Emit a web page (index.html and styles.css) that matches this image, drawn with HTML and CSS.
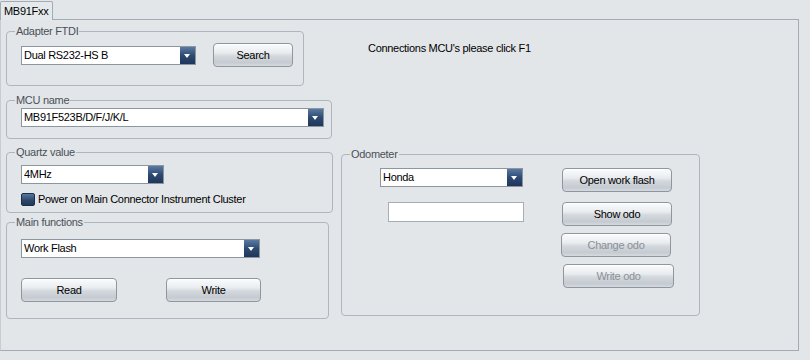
FILE: index.html
```html
<!DOCTYPE html>
<html lang="en">
<head>
    <meta charset="UTF-8">
    <title>MB91Fxx</title>
    <link rel="stylesheet" href="styles.css">
</head>
<body>
    <div class="tabs">
        <div class="tab">MB91Fxx</div>
    </div>
    <div class="pane">
        <div class="col-left">
            <fieldset class="group g-adapter">
                <legend>Adapter FTDI</legend>
                <div class="inner row">
                    <div class="combo combo-adapter"><span>Dual RS232-HS B</span><i class="arrow"></i></div>
                    <button class="btn btn-search">Search</button>
                </div>
            </fieldset>
            <fieldset class="group g-mcu">
                <legend>MCU name</legend>
                <div class="inner">
                    <div class="combo combo-mcu"><span>MB91F523B/D/F/J/K/L</span><i class="arrow"></i></div>
                </div>
            </fieldset>
            <fieldset class="group g-quartz">
                <legend>Quartz value</legend>
                <div class="inner">
                    <div class="combo combo-quartz"><span>4MHz</span><i class="arrow"></i></div>
                    <label class="check"><i class="box"></i>Power on Main Connector Instrument Cluster</label>
                </div>
            </fieldset>
            <fieldset class="group g-main">
                <legend>Main functions</legend>
                <div class="inner">
                    <div class="combo combo-main"><span>Work Flash</span><i class="arrow"></i></div>
                    <div class="row btn-row">
                        <button class="btn btn-read">Read</button>
                        <button class="btn btn-write">Write</button>
                    </div>
                </div>
            </fieldset>
        </div>
        <div class="col-right">
            <p class="hint">Connections MCU's please click F1</p>
            <fieldset class="group g-odo">
                <legend>Odometer</legend>
                <div class="inner odo-body">
                    <div class="odo-left">
                        <div class="combo combo-odo"><span>Honda</span><i class="arrow"></i></div>
                        <input class="edit" type="text">
                    </div>
                    <div class="odo-right">
                        <button class="btn btn-odo">Open work flash</button>
                        <button class="btn btn-odo">Show odo</button>
                        <button class="btn btn-odo btn-change" disabled>Change odo</button>
                        <button class="btn btn-odo btn-writeodo" disabled>Write odo</button>
                    </div>
                </div>
            </fieldset>
        </div>
    </div>
</body>
</html>
```

FILE: styles.css
```css
body {
    margin: 0;
    background-color: #e3e6e9;
    font-family: "Liberation Sans", Arial, sans-serif;
    font-size: 11px;
    letter-spacing: -0.3px;
    color: #000;
}
.tabs {
    height: 19px;
    display: flex;
}
.tab {
    position: relative;
    z-index: 1;
    width: 53px;
    height: 19px;
    margin-top: 1px;
    box-sizing: border-box;
    border: 1px solid #a3abb4;
    border-bottom: none;
    border-radius: 2px 2px 0 0;
    background-color: #e6e9ec;
    padding: 3px 0 0 3px;
    line-height: 13px;
}
.pane {
    display: flex;
    width: 799px;
    height: 332px;
    box-sizing: border-box;
    border: 1px solid #a3abb4;
    border-left-color: #c7cdd3;
    padding-left: 5px;
}
.col-left {
    width: 327px;
    padding-top: 5px;
}
.col-right {
    margin-left: 8px;
}
.group {
    margin: 0;
    border: 1px solid #aeb6bf;
    border-radius: 4px;
    padding: 0;
    box-sizing: border-box;
    min-width: 0;
}
.group legend {
    display: block;
    height: 13px;
    margin-left: 8px;
    padding: 0 1px;
    line-height: 13px;
    color: #4a5058;
}
.inner {
    padding-left: 14px;
}
.row {
    display: flex;
    align-items: center;
}
.g-adapter {
    width: 298px;
    height: 61px;
    padding-top: 5px;
}
.g-mcu {
    width: 326px;
    height: 45px;
    margin-top: 8px;
    padding-top: 1px;
}
.g-quartz {
    width: 327px;
    height: 67px;
    margin-top: 7px;
    padding-top: 6px;
}
.g-main {
    width: 323px;
    height: 103px;
    margin-top: 3px;
    padding-top: 10px;
}
.combo {
    display: flex;
    align-items: center;
    height: 19px;
    box-sizing: border-box;
    border: 1px solid #8c96a1;
    background-color: #fff;
}
.combo span {
    flex: 1;
    padding-left: 2px;
    line-height: 17px;
    white-space: nowrap;
}
.combo .arrow {
    display: block;
    width: 15px;
    height: 17px;
    background: linear-gradient(#5a7aa3, #2d4a72 50%, #1f3659);
    position: relative;
}
.combo .arrow::after {
    content: '';
    position: absolute;
    left: 4px;
    top: 7px;
    border-left: 3.5px solid transparent;
    border-right: 3.5px solid transparent;
    border-top: 4px solid #fff;
}
.combo-adapter { width: 175px; }
.combo-mcu { width: 303px; }
.combo-quartz { width: 143px; }
.combo-main { width: 239px; }
.combo-odo { width: 143px; }
.btn {
    height: 24px;
    box-sizing: border-box;
    border: 1px solid #8e969f;
    border-radius: 4px;
    background: linear-gradient(#fafbfc, #e9ecef 40%, #d3d8dd 55%, #c5cbd1 85%, #d6dadf);
    box-shadow: inset 0 1px 0 #fff;
    font-family: inherit;
    font-size: 11px;
    letter-spacing: -0.3px;
    color: #000;
    padding: 0;
}
.btn:disabled {
    color: #8a9097;
}
.btn-search {
    width: 80px;
    margin-left: 17px;
}
.btn-row {
    margin-top: 20px;
}
.btn-read { width: 96px; }
.btn-write {
    width: 95px;
    margin-left: 49px;
}
.check {
    display: flex;
    align-items: center;
    margin-top: 8px;
    height: 14px;
}
.check .box {
    display: block;
    width: 14px;
    height: 13px;
    box-sizing: border-box;
    border: 1px solid #1c2f4a;
    border-radius: 2px;
    background: linear-gradient(#56789f, #2b4569 60%, #203859);
    margin-right: 3px;
}
.hint {
    margin: 22px 0 0 27px;
    line-height: 13px;
}
.g-odo {
    width: 359px;
    height: 168px;
    margin-top: 93px;
    padding-top: 7px;
}
.odo-body {
    display: flex;
    padding-left: 38px;
}
.odo-left {
    display: flex;
    flex-direction: column;
}
.edit {
    width: 136px;
    height: 20px;
    box-sizing: border-box;
    margin: 15px 0 0 8px;
    border: 1px solid #a5adb6;
    background-color: #fff;
}
.odo-right {
    display: flex;
    flex-direction: column;
    margin-left: 38px;
}
.btn-odo {
    width: 110px;
    margin-top: 7px;
}
.btn-odo:first-child {
    margin-top: 0;
}
.btn-odo:nth-child(2) {
    margin-top: 10px;
}
.btn-change {
    margin-left: -1px;
}
.btn-writeodo {
    width: 111px;
    margin-left: 1px;
}
```
